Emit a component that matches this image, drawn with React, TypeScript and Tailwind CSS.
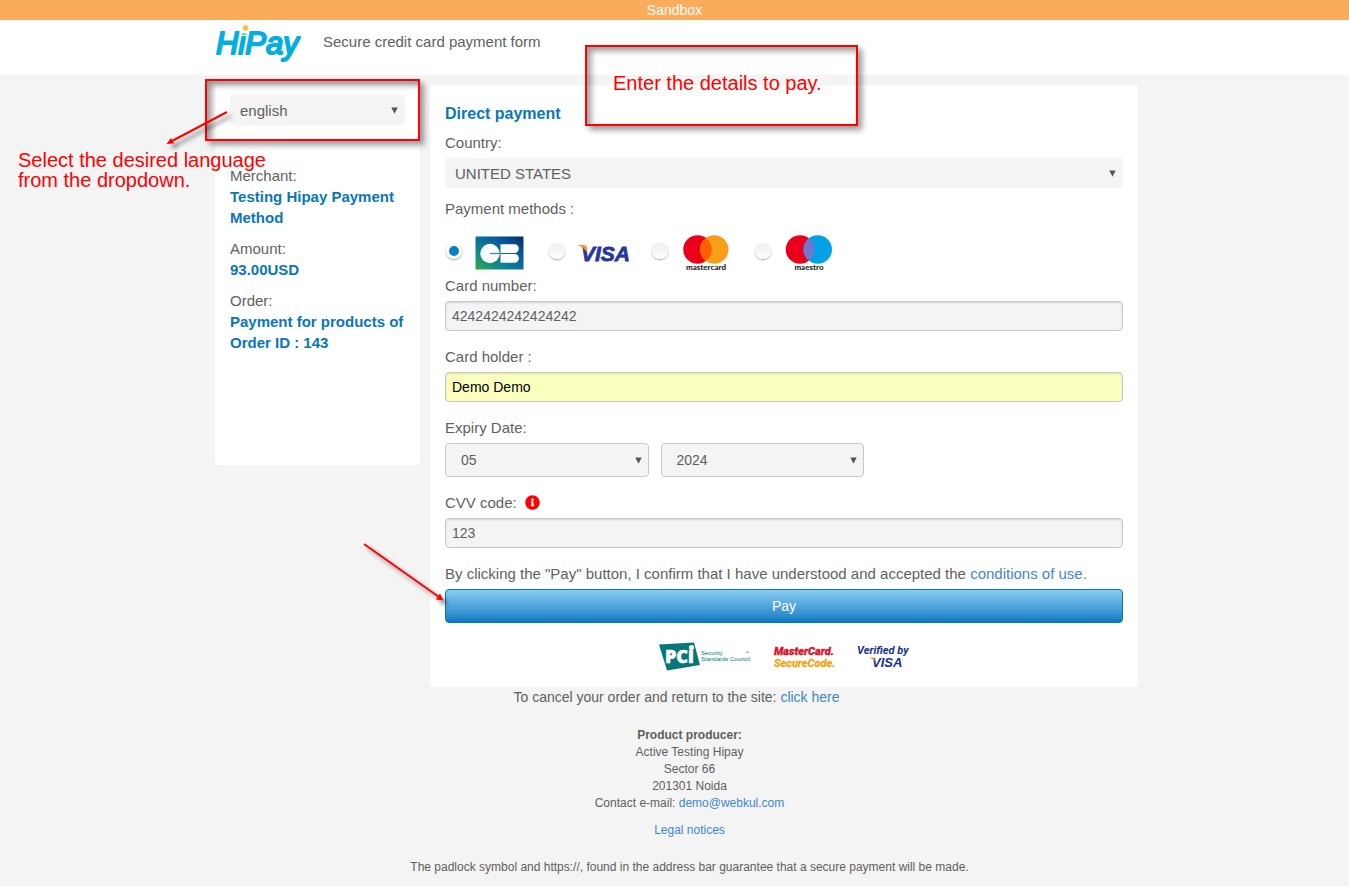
import React, { useState } from "react";
import { FaInfoCircle } from "react-icons/fa";

interface InfoProps {
  label: string;
  value: string;
}

interface SelectProps {
  id: string;
  label?: string;
  options: string[];
  className: string;
}

const inputStyle =
  "block w-full h-[30px] px-1.5 text-sm rounded border border-[#c8c8c8] shadow-[inset_0_1px_2px_rgba(0,0,0,0.12)] outline-none";

const noteBox =
  "absolute border-2 border-[#ff0000] shadow-[4px_4px_6px_rgba(0,0,0,0.4),inset_4px_4px_6px_rgba(0,0,0,0.4)]";

const HiPayLogo = () => (
  <svg width="86" height="50" viewBox="0 0 86 50" role="img" aria-label="HiPay">
    <text
      x="1"
      y="34"
      fill="#05aee0"
      stroke="#05aee0"
      strokeWidth="2"
      strokeLinejoin="round"
      fontFamily="'Liberation Sans', sans-serif"
      fontStyle="italic"
      fontSize="31"
    >
      HiPay
    </text>
    <circle cx="30" cy="9.5" r="4.2" fill="#fff" />
    <circle cx="30.5" cy="8" r="2.8" fill="#fdc037" />
  </svg>
);

const CbLogo = () => (
  <svg width="58" height="38" viewBox="0 0 58 38" role="img" aria-label="CB">
    <defs>
      <linearGradient id="cbBack" x1="0" y1="1" x2="1" y2="0">
        <stop offset="0" stopColor="#35a845" />
        <stop offset="0.35" stopColor="#0b8296" />
        <stop offset="0.7" stopColor="#07599c" />
        <stop offset="1" stopColor="#0a2a66" />
      </linearGradient>
    </defs>
    <rect x="1.5" y="2.5" width="48" height="33" fill="url(#cbBack)" />
    <circle cx="16" cy="19.5" r="9.7" fill="#fff" />
    <path d="M26.5 10.3H40.5a4.3 4.3 0 0 1 0 8.6H26.5z" fill="#fff" />
    <path d="M26.5 20.1H40.5a4.3 4.3 0 0 1 0 8.6H26.5z" fill="#fff" />
    <path d="M16 19.5H27" stroke="#3d8fa5" strokeWidth="1.4" />
  </svg>
);

const VisaLogo = () => (
  <svg width="58" height="38" viewBox="0 0 58 38" role="img" aria-label="Visa">
    <text
      x="4"
      y="27"
      fill="#26379b"
      fontFamily="'Liberation Sans', sans-serif"
      fontWeight="700"
      fontStyle="italic"
      stroke="#26379b"
      strokeWidth="0.8"
      fontSize="21"
    >
      VISA
    </text>
    <path d="M-0.5 11H7Q9 11 9.5 13L10.5 19Q6 12.5 -0.5 11z" fill="#f39a1d" />
  </svg>
);

const MastercardLogo = () => (
  <svg width="58" height="38" viewBox="0 0 58 38">
    <circle cx="17.5" cy="15.5" r="14.3" fill="#eb001b" />
    <circle cx="34.2" cy="15.5" r="14.3" fill="#f79e1b" />
    <path d="M25.85 3.9a14.3 14.3 0 0 1 0 23.2a14.3 14.3 0 0 1 0-23.2z" fill="#ff5f00" />
    <text
      x="26"
      y="36"
      textAnchor="middle"
      fill="#231f20"
      fontFamily="Lato, sans-serif"
      fontWeight="900"
      fontSize="8"
    >
      mastercard
    </text>
  </svg>
);

const MaestroLogo = () => (
  <svg width="58" height="38" viewBox="0 0 58 38">
    <circle cx="17" cy="15.5" r="14.3" fill="#eb001b" />
    <circle cx="34.7" cy="15.5" r="14.3" fill="#00a2e5" />
    <path d="M25.85 4.3a14.3 14.3 0 0 1 0 22.4a14.3 14.3 0 0 1 0-22.4z" fill="#7375cf" />
    <text
      x="26"
      y="36"
      textAnchor="middle"
      fill="#231f20"
      fontFamily="Lato, sans-serif"
      fontWeight="900"
      fontSize="8"
    >
      maestro
    </text>
  </svg>
);

const PciLogo = () => (
  <svg width="92" height="30" viewBox="0 0 92 30">
    <path d="M0 3.5L35 1.5L41 24L8 29.5z" fill="#05777a" />
    <text
      x="6"
      y="22"
      fill="#fff"
      stroke="#fff"
      strokeWidth="0.5"
      fontFamily="'Open Sans', sans-serif"
      fontWeight="800"
      fontSize="18"
    >
      PCi
    </text>
    <circle cx="32.5" cy="6.5" r="2.6" fill="#fff" />
    <g fill="#05777a" fontFamily="'Liberation Sans', sans-serif">
      <text x="42" y="14" fontSize="6">Security</text>
      <text x="42" y="20" fontSize="6">Standards Council</text>
      <text x="86" y="13" fontSize="4">™</text>
    </g>
  </svg>
);

const SecureCodeLogo = () => (
  <svg width="62" height="30" viewBox="0 0 62 30">
    <g
      fontFamily="Roboto, sans-serif"
      fontWeight="900"
      fontStyle="italic"
      fontSize="11"
      strokeWidth="0.3"
    >
      <text x="1" y="14" fill="#d9112b" stroke="#d9112b">MasterCard.</text>
      <text x="1" y="26" fill="#f0a30d" stroke="#f0a30d" fontWeight="700">
        SecureCode.
      </text>
    </g>
  </svg>
);

const VerifiedLogo = () => (
  <svg width="53" height="30" viewBox="0 0 53 30">
    <g fill="#14308c" fontStyle="italic" fontWeight="700">
      <text x="0" y="13" fontFamily="Roboto, sans-serif" fontSize="11">
        Verified by
      </text>
      <text x="15" y="26" fontFamily="'Liberation Sans', sans-serif" fontSize="13">
        VISA
      </text>
    </g>
    <path d="M12 16.5H17L19 21Q16 17.5 12 16.5z" fill="#f39a1d" />
  </svg>
);

const cards = [
  { id: "cb", logo: <CbLogo /> },
  { id: "visa", logo: <VisaLogo /> },
  { id: "mastercard", logo: <MastercardLogo /> },
  { id: "maestro", logo: <MaestroLogo /> },
];

const Select = ({ id, label, options, className }: SelectProps) => (
  <div className="relative w-full">
    <select
      id={id}
      aria-label={label}
      className={`block w-full appearance-none bg-[#f4f4f4] rounded outline-none ${className}`}
    >
      {options.map((option) => (
        <option key={option}>{option}</option>
      ))}
    </select>
    <svg
      className="absolute right-[7px] inset-y-0 my-auto pointer-events-none"
      width="7"
      height="7"
      viewBox="0 0 7 7"
    >
      <path d="M0.3 0.5H6.7L3.5 6.8z" fill="#555" />
    </svg>
  </div>
);

const Info = ({ label, value }: InfoProps) => (
  <div className="mb-2.5">
    <dt>{label}</dt>
    <dd className="font-bold text-[#0a76b7]">{value}</dd>
  </div>
);

// red hand-made notes that lie over the page
const Notes = () => (
  <div className="pointer-events-none text-xl leading-5 text-[#ff0000]">
    <div className={`${noteBox} -left-1.5 top-1 w-[215px] h-[62px]`} />
    <p className="absolute left-[-193px] top-[75px] whitespace-nowrap">
      Select the desired language
      <br />
      from the dropdown.
    </p>
    <div className={`${noteBox} left-[374px] top-[-30px] w-[273px] h-[81px]`} />
    <p className="absolute left-[402px] top-[-2px] whitespace-nowrap">
      Enter the details to pay.
    </p>
    <svg
      className="absolute left-[-51px] top-[30px] drop-shadow-[4px_4px_2px_rgba(0,0,0,0.5)]"
      width="74"
      height="46"
      viewBox="0 0 74 46"
    >
      <path d="M67 7L11 36.5" stroke="#ff0000" strokeWidth="2" />
      <path d="M6.5 39L11 33L14 38.5z" fill="#ff0000" />
    </svg>
    <svg
      className="absolute left-[148px] top-[464px] drop-shadow-[4px_4px_2px_rgba(0,0,0,0.5)]"
      width="94"
      height="70"
      viewBox="0 0 94 70"
    >
      <path d="M5 5L80 58" stroke="#ff0000" strokeWidth="2" />
      <path d="M84.5 61.5L77 60.5L81 54.5z" fill="#ff0000" />
    </svg>
  </div>
);

const App = () => {
  const [card, setCard] = useState("cb");

  return (
    <div className="min-h-screen bg-[#f4f4f4] text-[#5f5f5f] text-[15px] leading-[21px] font-['Liberation_Sans',Arial,sans-serif]">
      <div className="h-5 bg-[#fbac5a] text-white text-sm leading-5 text-center">
        Sandbox
      </div>
      <header className="bg-white">
        <div className="max-w-[927px] mx-auto pl-1 h-[55px] flex items-start gap-[22px]">
          <HiPayLogo />
          <h1 className="pt-[11px]">Secure credit card payment form</h1>
        </div>
      </header>

      <div className="relative max-w-[927px] mx-auto pl-1 pt-2.5">
        <div className="flex items-start gap-2.5">
          <aside className="w-[205px] min-h-[380px] shrink-0 bg-white rounded px-[15px] pt-2.5">
            <Select
              id="language"
              label="Language"
              options={["english", "français"]}
              className="h-[30px] px-2.5"
            />
            <dl className="mt-10">
              <Info label="Merchant:" value="Testing Hipay Payment Method" />
              <Info label="Amount:" value="93.00USD" />
              <Info
                label="Order:"
                value="Payment for products of Order ID : 143"
              />
            </dl>
          </aside>

          <main className="flex-1 bg-white rounded px-[15px] pt-[18px] pb-4">
            <form onSubmit={(e) => e.preventDefault()}>
              <h2 className="mb-2 text-base leading-[21px] font-bold text-[#0a76b7]">
                Direct payment
              </h2>
              <label htmlFor="country" className="block mb-[5px]">
                Country:
              </label>
              <Select
                id="country"
                options={["UNITED STATES", "FRANCE"]}
                className="h-[30px] px-2.5"
              />

              <fieldset className="mt-2.5">
                <legend>Payment methods :</legend>
                <div className="flex pt-[15px] pb-[3px] pl-px">
                  {cards.map((item) => (
                    <label
                      key={item.id}
                      className="flex items-center gap-3 w-[103px]"
                    >
                      <input
                        type="radio"
                        name="card"
                        aria-label={item.id}
                        checked={card === item.id}
                        onChange={() => setCard(item.id)}
                        className="appearance-none size-4 mb-1 shrink-0 rounded-full bg-linear-to-b from-[#eeeeee] to-white shadow-[0_1px_2px_rgba(0,0,0,0.35)] checked:bg-none checked:bg-[#0a7ec2] checked:border-3 checked:border-white"
                      />
                      {item.logo}
                    </label>
                  ))}
                </div>
              </fieldset>

              <label htmlFor="number" className="block mb-[5px]">
                Card number:
              </label>
              <input
                id="number"
                defaultValue="4242424242424242"
                className={`${inputStyle} bg-[#f4f4f4]`}
              />

              <label htmlFor="holder" className="block mt-[15px] mb-[5px]">
                Card holder :
              </label>
              <input
                id="holder"
                defaultValue="Demo Demo"
                className={`${inputStyle} bg-[#faffbd] text-black`}
              />

              <label htmlFor="month" className="block mt-[15px] mb-[5px]">
                Expiry Date:
              </label>
              <div className="flex gap-3 w-[419px] max-w-full">
                <Select
                  id="month"
                  options={["05", "06", "07"]}
                  className="h-[34px] px-[15px] text-sm border border-[#c8c8c8]"
                />
                <Select
                  id="year"
                  label="Year"
                  options={["2024", "2025", "2026"]}
                  className="h-[34px] px-[15px] text-sm border border-[#c8c8c8]"
                />
              </div>

              <div className="flex items-center gap-2 mt-[15px] mb-[5px]">
                <label htmlFor="cvv">CVV code:</label>
                <FaInfoCircle size={15} color="#ff0000" />
              </div>
              <input
                id="cvv"
                defaultValue="123"
                className={`${inputStyle} bg-[#f4f4f4]`}
              />

              <p className="mt-[15px] mb-[5px]">
                By clicking the "Pay" button, I confirm that I have understood
                and accepted the{" "}
                <a href="#terms" className="text-[#3f86cf]">
                  conditions of use.
                </a>
              </p>
              <button
                type="submit"
                className="block w-full h-[34px] rounded border border-[#0a76b7] bg-linear-to-b from-[#87cef2] to-[#037cc2] text-white text-sm cursor-pointer"
              >
                Pay
              </button>
            </form>
            <div className="flex justify-center gap-[22px] pt-[18px]">
              <PciLogo />
              <SecureCodeLogo />
              <VerifiedLogo />
            </div>
          </main>
        </div>
        <p className="text-center text-sm leading-[21px]">
          To cancel your order and return to the site:{" "}
          <a href="#cancel" className="text-[#3f86cf]">
            click here
          </a>
        </p>
        <Notes />
      </div>

      <footer className="pt-[19px] pb-2.5 pl-[30px] text-center text-xs leading-[17px]">
        <address className="not-italic">
          <strong>Product producer:</strong>
          <br />
          Active Testing Hipay
          <br />
          Sector 66
          <br />
          201301 Noida
          <br />
          Contact e-mail:{" "}
          <a href="mailto:demo@webkul.com" className="text-[#3f86cf]">
            demo@webkul.com
          </a>
        </address>
        <p className="mt-2.5">
          <a href="#legal" className="text-[#3f86cf]">
            Legal notices
          </a>
        </p>
        <p className="mt-5">
          The padlock symbol and https://, found in the address bar guarantee
          that a secure payment will be made.
        </p>
      </footer>
    </div>
  );
};

export default App;
